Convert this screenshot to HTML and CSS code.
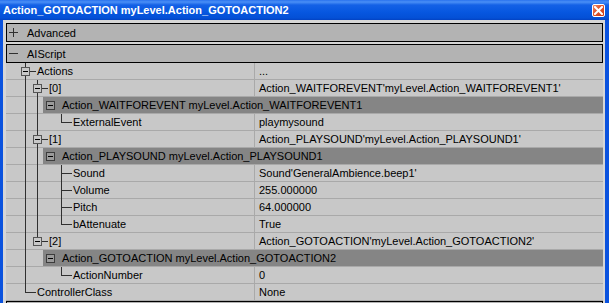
FILE: index.html
```html
<!DOCTYPE html>
<html lang="en">
<head>
    <meta charset="UTF-8">
    <title>Action_GOTOACTION myLevel.Action_GOTOACTION2</title>
    <link rel="stylesheet" href="styles.css">
</head>
<body>
    <div class="window">
        <div class="titlebar">
            <span class="title">Action_GOTOACTION myLevel.Action_GOTOACTION2</span>
            <span class="close">
                <svg width="9" height="9" viewBox="0 0 9 9"><path d="M1 1L8 8M8 1L1 8" stroke="#fff" stroke-width="2" stroke-linecap="square"/></svg>
            </span>
        </div>

        <div class="frame">
            <div class="sheet">
                <div class="category"><span class="sign plus"></span>Advanced</div>
                <div class="category"><span class="sign minus"></span>AIScript</div>

                <div class="props">
                    <div class="prop">
                        <div class="name"><span class="guide tee"><span class="box"></span></span>Actions</div>
                        <div class="value">...</div>
                    </div>
                    <div class="prop">
                        <div class="name"><span class="guide pipe"></span><span class="guide tee"><span class="box"></span></span>[0]</div>
                        <div class="value">Action_WAITFOREVENT'myLevel.Action_WAITFOREVENT1'</div>
                    </div>
                    <div class="prop group">
                        <span class="guide pipe"></span><span class="guide pipe"></span>
                        <div class="band"><span class="box"></span>Action_WAITFOREVENT myLevel.Action_WAITFOREVENT1</div>
                    </div>
                    <div class="prop">
                        <div class="name"><span class="guide pipe"></span><span class="guide pipe"></span><span class="guide"></span><span class="guide elbow"></span>ExternalEvent</div>
                        <div class="value">playmysound</div>
                    </div>

                    <div class="prop">
                        <div class="name"><span class="guide pipe"></span><span class="guide tee"><span class="box"></span></span>[1]</div>
                        <div class="value">Action_PLAYSOUND'myLevel.Action_PLAYSOUND1'</div>
                    </div>
                    <div class="prop group">
                        <span class="guide pipe"></span><span class="guide pipe"></span>
                        <div class="band"><span class="box"></span>Action_PLAYSOUND myLevel.Action_PLAYSOUND1</div>
                    </div>
                    <div class="prop">
                        <div class="name"><span class="guide pipe"></span><span class="guide pipe"></span><span class="guide"></span><span class="guide tee"></span>Sound</div>
                        <div class="value">Sound'GeneralAmbience.beep1'</div>
                    </div>
                    <div class="prop">
                        <div class="name"><span class="guide pipe"></span><span class="guide pipe"></span><span class="guide"></span><span class="guide tee"></span>Volume</div>
                        <div class="value">255.000000</div>
                    </div>
                    <div class="prop">
                        <div class="name"><span class="guide pipe"></span><span class="guide pipe"></span><span class="guide"></span><span class="guide tee"></span>Pitch</div>
                        <div class="value">64.000000</div>
                    </div>
                    <div class="prop">
                        <div class="name"><span class="guide pipe"></span><span class="guide pipe"></span><span class="guide"></span><span class="guide elbow"></span>bAttenuate</div>
                        <div class="value">True</div>
                    </div>

                    <div class="prop">
                        <div class="name"><span class="guide pipe"></span><span class="guide elbow"><span class="box"></span></span>[2]</div>
                        <div class="value">Action_GOTOACTION'myLevel.Action_GOTOACTION2'</div>
                    </div>
                    <div class="prop group">
                        <span class="guide pipe"></span><span class="guide"></span>
                        <div class="band"><span class="box"></span>Action_GOTOACTION myLevel.Action_GOTOACTION2</div>
                    </div>
                    <div class="prop">
                        <div class="name"><span class="guide pipe"></span><span class="guide"></span><span class="guide"></span><span class="guide elbow"></span>ActionNumber</div>
                        <div class="value">0</div>
                    </div>

                    <div class="prop">
                        <div class="name"><span class="guide elbow"></span>ControllerClass</div>
                        <div class="value">None</div>
                    </div>
                </div>

                <div class="category"></div>
            </div>
        </div>
    </div>
</body>
</html>
```

FILE: styles.css
```css
:root {
    --xp-blue: #0a52de;
    --sheet: #d6d6d6;
    --row: #c8c8c8;
    --row-line: #a9a9a9;
    --category: #b3b3b3;
    --band: #858585;
    --tree: #303030;
}

* {
    box-sizing: border-box;
    margin: 0;
    padding: 0;
}

body {
    background: var(--row);
    font-family: "Liberation Sans", Arial, sans-serif;
    font-size: 11px;
    color: #000;
}

.window {
    width: 609px;
    height: 303px;
    display: flex;
    flex-direction: column;
    overflow: hidden;
}

/* caption */
.titlebar {
    height: 20px;
    flex: none;
    display: flex;
    align-items: center;
    padding: 0 4px 0 3px;
    background: linear-gradient(#2a72ee 0, #4a8ff6 2px, #1461e6 5px, #0757e0 12px, #0450d6 18px, #0342c2 100%);
}

.title {
    color: #fff;
    font-weight: bold;
    font-size: 11px;
}

.close {
    margin-left: auto;
    width: 13px;
    height: 13px;
    display: flex;
    align-items: center;
    justify-content: center;
    border: 1px solid #fff;
    border-radius: 2px;
    background: linear-gradient(135deg, #f08a6a 0%, #e0542c 45%, #c83a12 100%);
}

/* body of the window */
.frame {
    flex: 1;
    display: flex;
    border-left: 3px solid var(--xp-blue);
    border-right: 4px solid var(--xp-blue);
    min-height: 0;
}

.sheet {
    flex: 1;
    background: var(--sheet);
    padding: 3px 2px 0 3px;
    overflow: hidden;
}

.category {
    height: 19px;
    display: flex;
    align-items: center;
    border: 1px solid #000;
    background: var(--category);
    margin-bottom: 2px;
}

.sign {
    width: 9px;
    height: 9px;
    margin: 0 9px 0 2px;
    background: linear-gradient(var(--tree), var(--tree)) 0 4px / 9px 1px no-repeat;
}

.sign.plus {
    background:
        linear-gradient(var(--tree), var(--tree)) 0 4px / 9px 1px no-repeat,
        linear-gradient(var(--tree), var(--tree)) 4px 0 / 1px 9px no-repeat;
}

.props {
    margin-top: -2px;
    background: var(--row);
}

/* one property line */
.prop {
    height: 17px;
    display: grid;
    grid-template-columns: 248px 1fr;
    border-bottom: 1px solid var(--row-line);
    line-height: 16px;
}

.name {
    display: flex;
    padding-left: 13px;
    white-space: nowrap;
}

.value {
    border-left: 1px solid var(--row-line);
    padding-left: 4px;
    white-space: nowrap;
}

/* tree connectors */
.guide {
    flex: none;
    width: 12px;
    height: 17px;
    display: flex;
    align-items: flex-start;
}

.pipe {
    background: linear-gradient(var(--tree), var(--tree)) 6px 0 / 1px 100% no-repeat;
}

.tee,
.elbow {
    width: 18px;
}

.tee {
    background:
        linear-gradient(var(--tree), var(--tree)) 6px 0 / 1px 100% no-repeat,
        linear-gradient(var(--tree), var(--tree)) 6px 8px / 11px 1px no-repeat;
}

.elbow {
    background:
        linear-gradient(var(--tree), var(--tree)) 6px 0 / 1px 9px no-repeat,
        linear-gradient(var(--tree), var(--tree)) 6px 8px / 11px 1px no-repeat;
}

.box {
    width: 9px;
    height: 9px;
    margin: 4px 0 0 2px;
    border: 1px solid #555;
    background: linear-gradient(#000, #000) center / 5px 1px no-repeat, var(--row);
}

/* object header inside the tree */
.prop.group {
    display: flex;
    padding-left: 13px;
}

.band {
    flex: 1;
    display: flex;
    align-items: flex-start;
    background: var(--band);
    white-space: nowrap;
}

.band .box {
    margin: 4px 7px 0 3px;
    border-color: #3c3c3c;
    background: linear-gradient(#000, #000) center / 5px 1px no-repeat, #9a9a9a;
}
```
